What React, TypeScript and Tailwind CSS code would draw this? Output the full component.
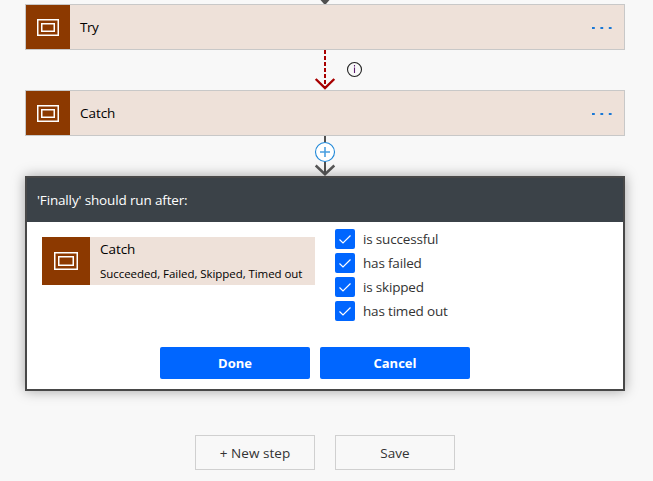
import React from "react";

function ScopeIcon({ width, height }: { width: number; height: number }) {
  return (
    <svg width={width} height={height} viewBox={`0 0 ${width} ${height}`} fill="none" stroke="#fff" strokeWidth="1.5">
      <rect x="0.75" y="0.75" width={width - 1.5} height={height - 1.5} />
      <rect x="4.75" y="4.75" width={width - 9.5} height={height - 9.5} />
    </svg>
  );
}

function ActionCard({ title, tracking }: { title: string; tracking: string }) {
  return (
    <div className="flex h-[46px] w-full shrink-0 items-center border border-[#c8c8c8] bg-[#eee1d9]">
      <div className="flex h-full w-11 items-center justify-center bg-[#8c3900]">
        <ScopeIcon width={22} height={17} />
      </div>
      <span className={`ml-[10px] text-[13.5px] text-black ${tracking}`}>{title}</span>
      <svg className="ml-auto mr-[11px] mt-[2px]" width="21" height="2" viewBox="0 0 21 2" fill="#1a78d6">
        <rect x="0" y="0" width="2.8" height="2" />
        <rect x="8.4" y="0" width="2.8" height="2" />
        <rect x="16.8" y="0" width="2.8" height="2" />
      </svg>
    </div>
  );
}

function Check({ label }: { label: string }) {
  return (
    <div className="flex h-5 items-center gap-2">
      <div className="flex size-5 items-center justify-center rounded-[2px] bg-[#0066ff]">
        <svg width="20" height="20" viewBox="0 0 20 20" fill="none" stroke="#fff" strokeWidth="1.2">
          <path d="M4.5 10.5 L8 14 L15.5 6.5" />
        </svg>
      </div>
      <span className="text-[13.5px] tracking-[-0.18px] text-[#333]">{label}</span>
    </div>
  );
}

export default function App() {
  return (
    <div className="h-[481px] w-[653px] overflow-hidden whitespace-nowrap bg-[#f8f8f8] pl-[25px] font-['Open_Sans','Noto_Sans',sans-serif] leading-5">
      <div className="flex w-[600px] flex-col">
        <svg className="h-1 w-full shrink-0" viewBox="0 0 600 4">
          <path d="M295.5 0 H304.5 L301 4 H299 Z" fill="#505050" />
        </svg>
        <ActionCard title="Try" tracking="tracking-[-0.5px]" />
        <svg className="h-10 w-full shrink-0" viewBox="0 0 600 40" fill="none">
          <path d="M300 0 V38" stroke="#a80000" strokeWidth="2" strokeDasharray="4 2" />
          <path d="M290.7 29 L300 38 L309.3 29" stroke="#a80000" strokeWidth="2.4" />
          <circle cx="329.5" cy="19.5" r="7" stroke="#222" strokeWidth="1.1" />
          <path d="M329.5 17.5 V23 M329.5 15 V16.4" stroke="#5c1a70" strokeWidth="1.1" />
        </svg>
        <ActionCard title="Catch" tracking="tracking-[-0.05px]" />
        <svg className="h-10 w-full shrink-0" viewBox="0 0 600 40" fill="none">
          <path d="M300 0 V38" stroke="#505050" strokeWidth="2" />
          <path d="M290.7 29.5 L300 38.2 L309.3 29.5" stroke="#585858" strokeWidth="2.5" />
          <circle cx="300" cy="16" r="9.5" fill="#fff" stroke="#2088d8" strokeWidth="1.1" />
          <path d="M295 16 H305 M300 11 V21" stroke="#4a9fe0" strokeWidth="1.6" />
        </svg>
        <div className="h-[215px] w-full border-2 border-[#484848] bg-white shadow-[0_0_12px_rgba(0,0,0,0.35)]">
          <div className="flex h-11 items-center bg-[#3b4248] pl-[10px] text-[13.5px] text-white">
            <span className="tracking-[-0.15px]">'Finally' should run after:</span>
          </div>
          <div className="flex pl-[15px] pt-[7px]">
            <div className="mt-2 flex h-12 w-[273px] bg-[#eee1d9] text-black">
              <div className="flex size-12 items-center justify-center bg-[#8c3900]">
                <ScopeIcon width={24} height={18} />
              </div>
              <div className="ml-[10px] flex flex-col pt-[2px]">
                <span className="text-[13.5px] tracking-[-0.05px]">Catch</span>
                <span className="mt-[5px] text-[11.5px] tracking-[-0.06px]">Succeeded, Failed, Skipped, Timed out</span>
              </div>
            </div>
            <div className="ml-5 flex flex-col gap-1">
              <Check label="is successful" />
              <Check label="has failed" />
              <Check label="is skipped" />
              <Check label="has timed out" />
            </div>
          </div>
          <div className="ml-[133px] mt-[26px] flex gap-[10px] text-[13px] font-bold text-white">
            <button className="h-8 w-[150px] rounded-[2px] bg-[#0066ff]">Done</button>
            <button className="h-8 w-[150px] rounded-[2px] bg-[#0066ff]">Cancel</button>
          </div>
        </div>
        <div className="mt-11 flex gap-5 pl-[170px] text-[13.5px] tracking-[0.05px] text-[#333]">
          <button className="h-[35px] w-[120px] border border-[#d0d0d0]">+ New step</button>
          <button className="h-[35px] w-[120px] border border-[#d0d0d0]">Save</button>
        </div>
      </div>
    </div>
  );
}
